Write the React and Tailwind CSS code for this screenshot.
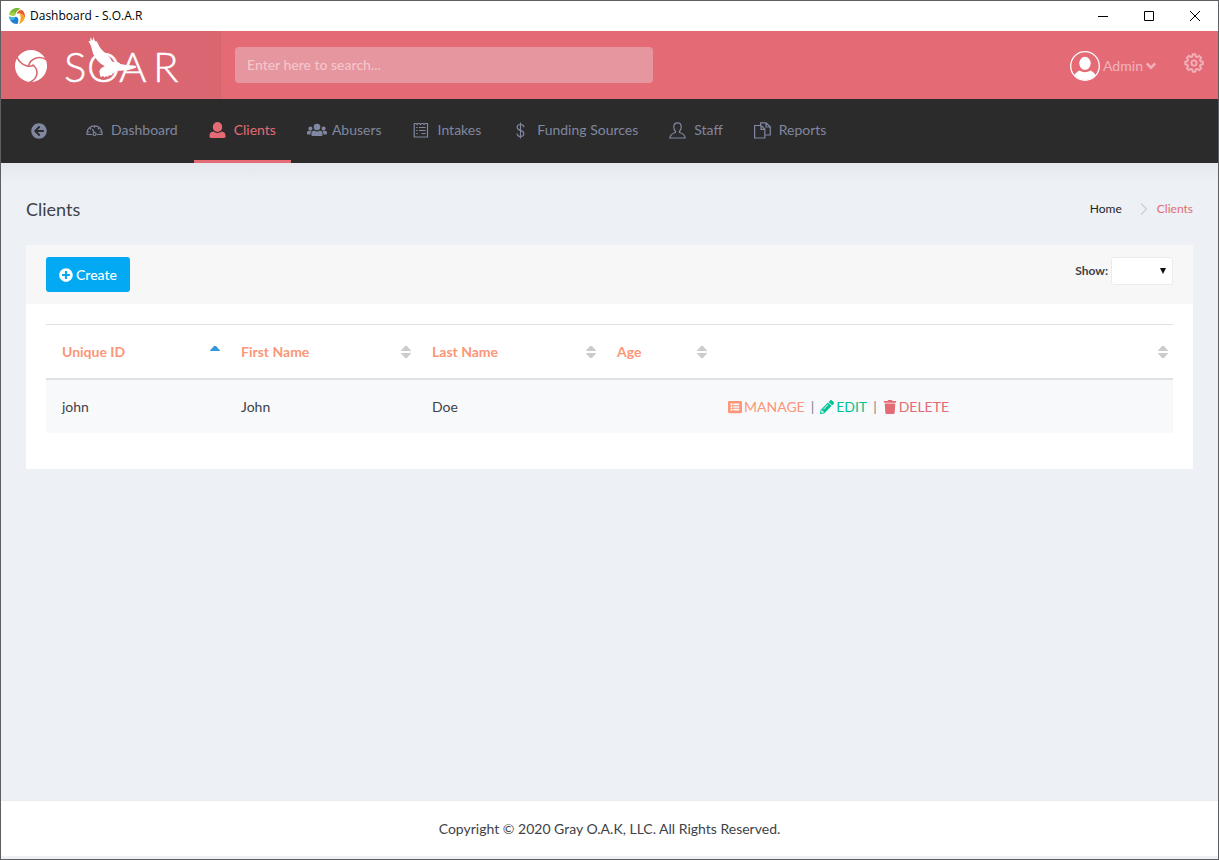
import React from "react";
import {
  FaArrowCircleLeft,
  FaListAlt,
  FaPencilAlt,
  FaPlusCircle,
  FaTrash,
} from "react-icons/fa";

function LineIcon({ children }) {
  return (
    <svg width="17" height="17" viewBox="0 0 17 17" fill="none" stroke="currentColor" strokeWidth="1.200" aria-hidden="true">
      {children}
    </svg>
  );
}

function GaugeIcon() {
  return (
    <LineIcon>
      <path d="M.5 12.500h5.500M11 12.500h5.500M1 12.500v-1.700a7.500 7 0 0 1 15 0v1.700" />
      <path d="M8.500 4v1.800M3.800 6l1.300 1.200M13.200 6l-1.300 1.200M2 10h1.500M13.500 10h1.500M6.300 7l1.900 3.600" />
      <circle cx="8.600" cy="12" r="1.500" />
    </LineIcon>
  );
}

function UserIcon() {
  return (
    <svg width="17" height="17" viewBox="0 0 17 17" fill="currentColor" aria-hidden="true">
      <ellipse cx="8.500" cy="5" rx="4.700" ry="5" />
      <path d="M4.300 9.600c1.200.8 2.500 1.300 4.200 1.300s3-.5 4.200-1.300c2.600.4 3.800 1.900 3.800 4v1c0 .9-.5 1.400-1.400 1.400H1.900c-.9 0-1.400-.5-1.400-1.400v-1c0-2.100 1.200-3.600 3.800-4z" />
    </svg>
  );
}

function UsersIcon() {
  return (
    <svg width="20" height="17" viewBox="0 0 20 17" fill="currentColor" aria-hidden="true">
      <circle cx="10" cy="5" r="3.300" />
      <circle cx="3.400" cy="6.400" r="2" />
      <circle cx="16.600" cy="6.400" r="2" />
      <path d="M7 8.600c2 1.200 4 1.200 6 0 1.700.4 2.600 1.500 2.600 3v.9c0 1-.5 1.500-1.400 1.500H5.800c-.9 0-1.400-.5-1.400-1.500v-.9c0-1.500.9-2.600 2.600-3z" />
      <path d="M2 8.800h2.700C3.800 9.800 3.500 10.900 3.500 12.500H.9c-.6 0-.9-.3-.9-.9v-.8c0-1.200.7-2 2-2zM18 8.800h-2.700c.9 1 1.200 2.100 1.200 3.700h2.600c.6 0 .9-.3.9-.9v-.8c0-1.200-.7-2-2-2z" />
    </svg>
  );
}

function FormIcon() {
  return (
    <LineIcon>
      <path d="M1 1.500h2l1 1 1-1h1.500l1 1 1-1H10l1 1 1-1h2.500v13.500H1.200V1.500" />
      <path d="M3.200 5.500h1.500M6 5.500h6.500M3.200 8.500h1.500M6 8.500h6.500M3.200 11.500h1.500M8.500 11.500h4" />
    </LineIcon>
  );
}

function DollarIcon() {
  return (
    <LineIcon>
      <path d="M8.500.5v16M11.800 5.200c0-1.700-1.300-2.700-3.300-2.700S5.200 3.500 5.200 5.200c0 2 1.500 2.700 3.300 3.200s3.300 1.300 3.300 3.200c0 1.800-1.400 2.900-3.300 2.900s-3.400-1.100-3.400-2.900" />
    </LineIcon>
  );
}

function PersonIcon() {
  return (
    <LineIcon>
      <path d="M6.500 9.200C5.300 8.300 4.800 6.800 4.800 4.900 4.800 2.600 6.200.9 8.500.9s3.700 1.700 3.700 4c0 1.900-.5 3.400-1.700 4.300v1.300c3.200.8 5.300 2.200 5.700 5.500H.8c.4-3.300 2.500-4.700 5.700-5.500z" />
    </LineIcon>
  );
}

function PagesIcon() {
  return (
    <LineIcon>
      <path d="M.6 3.500h6.600l3.600 3.600v8.900H.6zM7 3.700v3.600h3.600" />
      <path d="M6.600 3V.8H12l4.300 4V13h-5M12 1v4h4" />
    </LineIcon>
  );
}

function PinwheelLogo() {
  return (
    <svg className="shrink-0" width="34" height="34" viewBox="0 0 34 34" aria-hidden="true">
      <circle cx="17" cy="17" r="16" fill="#fff" />
      <g fill="none" stroke="#d96671" strokeWidth="1.600">
        <path d="M2.500 6.500C5 14.500 12 19 19.500 16.500" />
        <path d="M33 11C25.500 6 16 9 14.300 17.700" />
        <path d="M15.500 33.500C23.500 30 26 21.500 18.500 15.500" />
      </g>
    </svg>
  );
}

function SoarLogo() {
  return (
    <svg className="shrink-0" width="118" height="60" viewBox="0 0 118 60" role="img" aria-label="SOAR">
      <text x="0 23 55 89" y="46" fill="#fff" stroke="#fff" strokeWidth="0.400" fontFamily="Lato, sans-serif" fontWeight="300" fontSize="42">
        SOAR
      </text>
      <path
        fill="#fff"
        d="M24.500 5l2 .3-.5-4 2.600 3.500.6-4 1.800 4.400 2 .3c1.500 3.500 3 6.500 6 9.500 4 3.600 7.500 6 9 10.500 1.500.2 2.500 1 4.500.7 1.800-.2 3 .5 3.800 1.700 3.500.6 9 1.300 13.500 1.600 2 .2 3 1 2.200 2.200-5 2.300-11 3.200-18.500 3-2.500 1.500-5 2-6 4.500l-3 .2-.4 1.700-2-1-1.500 1.500-1.600-1.500-2.400 1-.6-2.200-.7-4c1.200-3 3.500-3.700 5.400-4.700-5.500-2.700-9.500-7.400-11.700-12.700l-2-7.500z"
      />
    </svg>
  );
}

function AppIcon() {
  return (
    <svg width="16" height="16" viewBox="0 0 16 16" aria-hidden="true">
      <path fill="#7ab733" d="M.3 6.500C.8 2.500 4.500 0 8 0c1.700 0 3 .5 4 1.200C9 1.500 7 3.500 6.500 7 4.500 8 1.500 8 .3 6.500z" />
      <path fill="#a8cf45" d="M.3 6.500C1.500 4 4 3 6.800 5.300L6.500 7C4.500 8 1.500 8 .3 6.500z" />
      <path fill="#e85a2c" d="M7.500 6C8 3 10.500 1.300 13 2c2.500 2 3.500 5 2.700 8-.8-3.500-4-5.500-8.200-4z" />
      <path fill="#f7a51c" d="M10.500 5.500c3 .2 5 2.200 5.200 4.500-.8 3-3 5.300-6.200 5.900C12 13 12.300 8.500 10.500 5.500z" />
      <path fill="#1f7fd0" d="M.2 8.200C2.500 9.500 5 9.300 7 8.500c2.500 1 3.500 4 1.500 7.500C4 16.200.3 13 .2 8.200z" />
      <path fill="#49b3e8" d="M.2 8.200C2.500 9.500 5 9.300 7 8.500 5.500 12 3.500 12.300 1.300 12 .6 11 .2 9.600.2 8.200z" />
      <path fill="none" stroke="#fff" strokeWidth="0.900" d="M0 7.500c2.500 1.300 5 1 7 .5 3.500 1.500 4 5 2 8M7 8C7 4 9.500 1.600 13 1.600" />
    </svg>
  );
}

function GearIcon() {
  return (
    <svg width="20" height="20" viewBox="0 0 20 20" fill="none" stroke="currentColor" strokeWidth="1.900" strokeLinejoin="round" aria-hidden="true">
      <circle cx="10" cy="10" r="2.600" />
      <path d="M8.700 1.200h2.600l.5 2.300 1.500.6 2-1.300 1.900 1.900-1.300 2 .6 1.500 2.300.5v2.600l-2.300.5-.6 1.500 1.300 2-1.900 1.900-2-1.300-1.500.6-.5 2.300H8.700l-.5-2.300-1.500-.6-2 1.300-1.900-1.900 1.300-2-.6-1.500-2.300-.5V8.700l2.300-.5.600-1.500-1.300-2 1.900-1.900 2 1.300 1.500-.6z" />
    </svg>
  );
}

function Avatar() {
  return (
    <svg width="30" height="30" viewBox="0 0 30 30" aria-hidden="true">
      <defs>
        <clipPath id="avatar-clip">
          <circle cx="15" cy="15" r="14" />
        </clipPath>
      </defs>
      <g clipPath="url(#avatar-clip)" fill="#fff">
        <ellipse cx="15" cy="12.300" rx="5.700" ry="6.500" />
        <path d="M3 27c1-4 3.500-5.800 6.500-7.500C11.500 20.700 13 21.200 15 21.200s3.500-.5 5.500-1.700C23.500 21.200 26 23 27 27v4H3z" />
      </g>
      <circle cx="15" cy="15" r="14.300" fill="none" stroke="#fff" strokeWidth="1.300" />
    </svg>
  );
}

function TitleBar() {
  return (
    <div className="flex h-[30px] items-center justify-between bg-white pl-2">
      <div className="flex items-center gap-[5px] font-['Open_Sans',sans-serif] text-[12px] text-black">
        <AppIcon />
        <span>Dashboard - S.O.A.R</span>
      </div>
      <div className="flex h-full text-black">
        <button type="button" aria-label="Minimize" className="grid w-[46px] place-items-center">
          <svg width="10" height="10" stroke="currentColor"><path d="M0 5.500h10" /></svg>
        </button>
        <button type="button" aria-label="Maximize" className="grid w-[46px] place-items-center">
          <svg width="10" height="10" stroke="currentColor" fill="none"><path d="M.5.5h9v9h-9z" /></svg>
        </button>
        <button type="button" aria-label="Close" className="grid w-[46px] place-items-center">
          <svg width="10" height="10" stroke="currentColor"><path d="M0 0l10 10M10 0L0 10" /></svg>
        </button>
      </div>
    </div>
  );
}

function Header() {
  return (
    <header className="flex h-[68px] items-center justify-between bg-[#e46a76] pr-[14px]">
      <div className="flex min-w-0 flex-1 items-center self-stretch">
        <a href="#home" className="flex w-[220px] shrink-0 items-center gap-4 self-stretch bg-[#d96671] pt-px pl-[13px]">
          <PinwheelLogo />
          <SoarLogo />
        </a>
        <input
          type="text"
          aria-label="Search"
          placeholder="Enter here to search..."
          className="ml-[14px] h-9 w-[418px] rounded bg-[#e6969f] px-3 pb-[2px] text-[14px] font-medium text-white placeholder:text-[#f4c6cb]"
        />
      </div>
      <div className="flex items-center gap-[28px] text-[#f1b0b7]">
        <button type="button" className="flex items-center gap-[3px] pt-px text-[14px] font-medium">
          <Avatar />
          <span>Admin</span>
          <svg width="10" height="8" viewBox="0 0 10 8" fill="none" stroke="currentColor" strokeWidth="2.500" aria-hidden="true">
            <path d="M.8 1.500L5 5.700l4.200-4.200" />
          </svg>
        </button>
        <button type="button" aria-label="Settings" className="pb-1">
          <GearIcon />
        </button>
      </div>
    </header>
  );
}

const navItems = [
  { label: "Dashboard", icon: <GaugeIcon /> },
  { label: "Clients", icon: <UserIcon />, active: true },
  { label: "Abusers", icon: <UsersIcon /> },
  { label: "Intakes", icon: <FormIcon /> },
  { label: "Funding Sources", icon: <DollarIcon /> },
  { label: "Staff", icon: <PersonIcon /> },
  { label: "Reports", icon: <PagesIcon /> },
];

function Nav() {
  return (
    <nav className="flex h-16 gap-px bg-[#2b2b2b] pl-[15px] text-[14px] text-[#8087a0]">
      <a href="#back" aria-label="Back" className="flex items-center px-[15px]">
        <span className="w-6"><FaArrowCircleLeft size={16} /></span>
      </a>
      {navItems.map((item) => (
        <a
          key={item.label}
          href={"#" + item.label.toLowerCase().replace(" ", "-")}
          aria-current={item.active ? "page" : undefined}
          className={
            item.active
              ? "flex items-center border-b-[3px] border-[#e46a76] px-[15px] text-[#e46a76]"
              : "flex items-center border-b-[3px] border-transparent px-[15px]"
          }
        >
          <span className="w-[25px] shrink-0 pt-[2px]">{item.icon}</span>
          <span>{item.label}</span>
        </a>
      ))}
    </nav>
  );
}

function SortIcon({ sorted }) {
  return (
    <svg width="10" height="14" viewBox="0 0 10 14" aria-hidden="true">
      {sorted ? (
        <path d="M0 6V5.500L4 1h2l4 4.500V6z" fill="#3398dc" />
      ) : (
        <path d="M0 6V5.500L4 1h2l4 4.500V6zM0 8h10v.5L6 13H4L0 8.500z" fill="#ccc" />
      )}
    </svg>
  );
}

const columns = [
  { label: "Unique ID", width: "w-[179px]", sorted: true },
  { label: "First Name", width: "w-[191px]" },
  { label: "Last Name", width: "w-[185px]" },
  { label: "Age", width: "w-[111px]" },
  { label: "", width: "" },
];

function ClientTable() {
  return (
    <table className="w-full table-fixed border-separate border-spacing-0 text-left text-[14px]">
      <thead>
        <tr>
          {columns.map((c) => (
            <th
              key={c.label}
              aria-label={c.label || "Actions"}
              aria-sort={c.sorted ? "ascending" : undefined}
              className={"h-14 border-t border-b-2 border-[#dee2e6] pr-[5px] pl-4 font-bold text-[#fb9678] " + c.width}
            >
              <div className="flex items-center justify-between">
                <span>{c.label}</span>
                <SortIcon sorted={c.sorted} />
              </div>
            </th>
          ))}
        </tr>
      </thead>
      <tbody>
        <tr className="h-[53px] bg-[#f8f9fb] text-[#3e4247]">
          <td className="pl-4">john</td>
          <td className="pl-4">John</td>
          <td className="pl-4">Doe</td>
          <td className="pl-4" />
          <td className="pl-4">
            <div className="flex items-center gap-[6px]">
              <a href="#manage" className="flex items-center gap-[2px] text-[#fb9678]">
                <FaListAlt size={14} />MANAGE
              </a>
              <span className="text-[#7d8187]">|</span>
              <a href="#edit" className="flex items-center gap-[2px] text-[#00c292]">
                <FaPencilAlt size={14} />EDIT
              </a>
              <span className="text-[#7d8187]">|</span>
              <a href="#delete" className="flex items-center gap-[2px] text-[#e46a76]">
                <FaTrash size={14} />DELETE
              </a>
            </div>
          </td>
        </tr>
      </tbody>
    </table>
  );
}

export default function App() {
  return (
    <div className="flex min-h-screen flex-col border border-[#5d5f63] bg-[#edf0f5] font-[Lato,sans-serif] text-[#3e4247]">
      <TitleBar />
      <Header />
      <Nav />
      <main className="flex-1 bg-linear-to-b from-[#e5e9ee] to-[#edf0f5] to-[20px] px-[25px] pt-[34px] pb-8">
        <div className="flex h-12 items-start justify-between">
          <h1 className="text-[18px] leading-6">Clients</h1>
          <nav aria-label="Breadcrumb" className="flex items-center text-[12px] leading-6">
            <a href="#home" className="text-[#212529]">Home</a>
            <svg className="mr-[9px] ml-[18px]" width="8" height="12" fill="none" stroke="#ccd0d6" strokeWidth="1.300" aria-hidden="true">
              <path d="M1 .5L6.500 6 1 11.500" />
            </svg>
            <span className="text-[#e46a76]">Clients</span>
          </nav>
        </div>
        <section className="bg-white">
          <div className="flex items-start justify-between bg-[#f7f7f7] px-5 py-3">
            <button type="button" className="flex h-[35px] items-center gap-[3px] rounded-[3px] bg-[#03a9f3] px-[13px] text-[14px] font-medium text-white">
              <FaPlusCircle size={14} />
              Create
            </button>
            <div className="flex items-center gap-[3px]">
              <label htmlFor="show" className="text-[12px] font-bold">Show:</label>
              <div className="relative">
                <select id="show" className="block h-7 w-[62px] appearance-none rounded-[3px] border border-[#e9ecef] bg-white">
                  <option value="" />
                  <option>10</option>
                  <option>25</option>
                </select>
                <svg className="pointer-events-none absolute top-[11px] right-[7px]" width="6" height="6" aria-hidden="true">
                  <path d="M0 0h6L3 6z" fill="#111" />
                </svg>
              </div>
            </div>
          </div>
          <div className="px-5 pt-5 pb-9">
            <ClientTable />
          </div>
        </section>
      </main>
      <footer className="mb-[3px] border-t border-[#e9ecef] bg-white py-[17px] text-center text-[14px] leading-[21px]">
        Copyright © 2020 Gray O.A.K, LLC. All Rights Reserved.
      </footer>
    </div>
  );
}
